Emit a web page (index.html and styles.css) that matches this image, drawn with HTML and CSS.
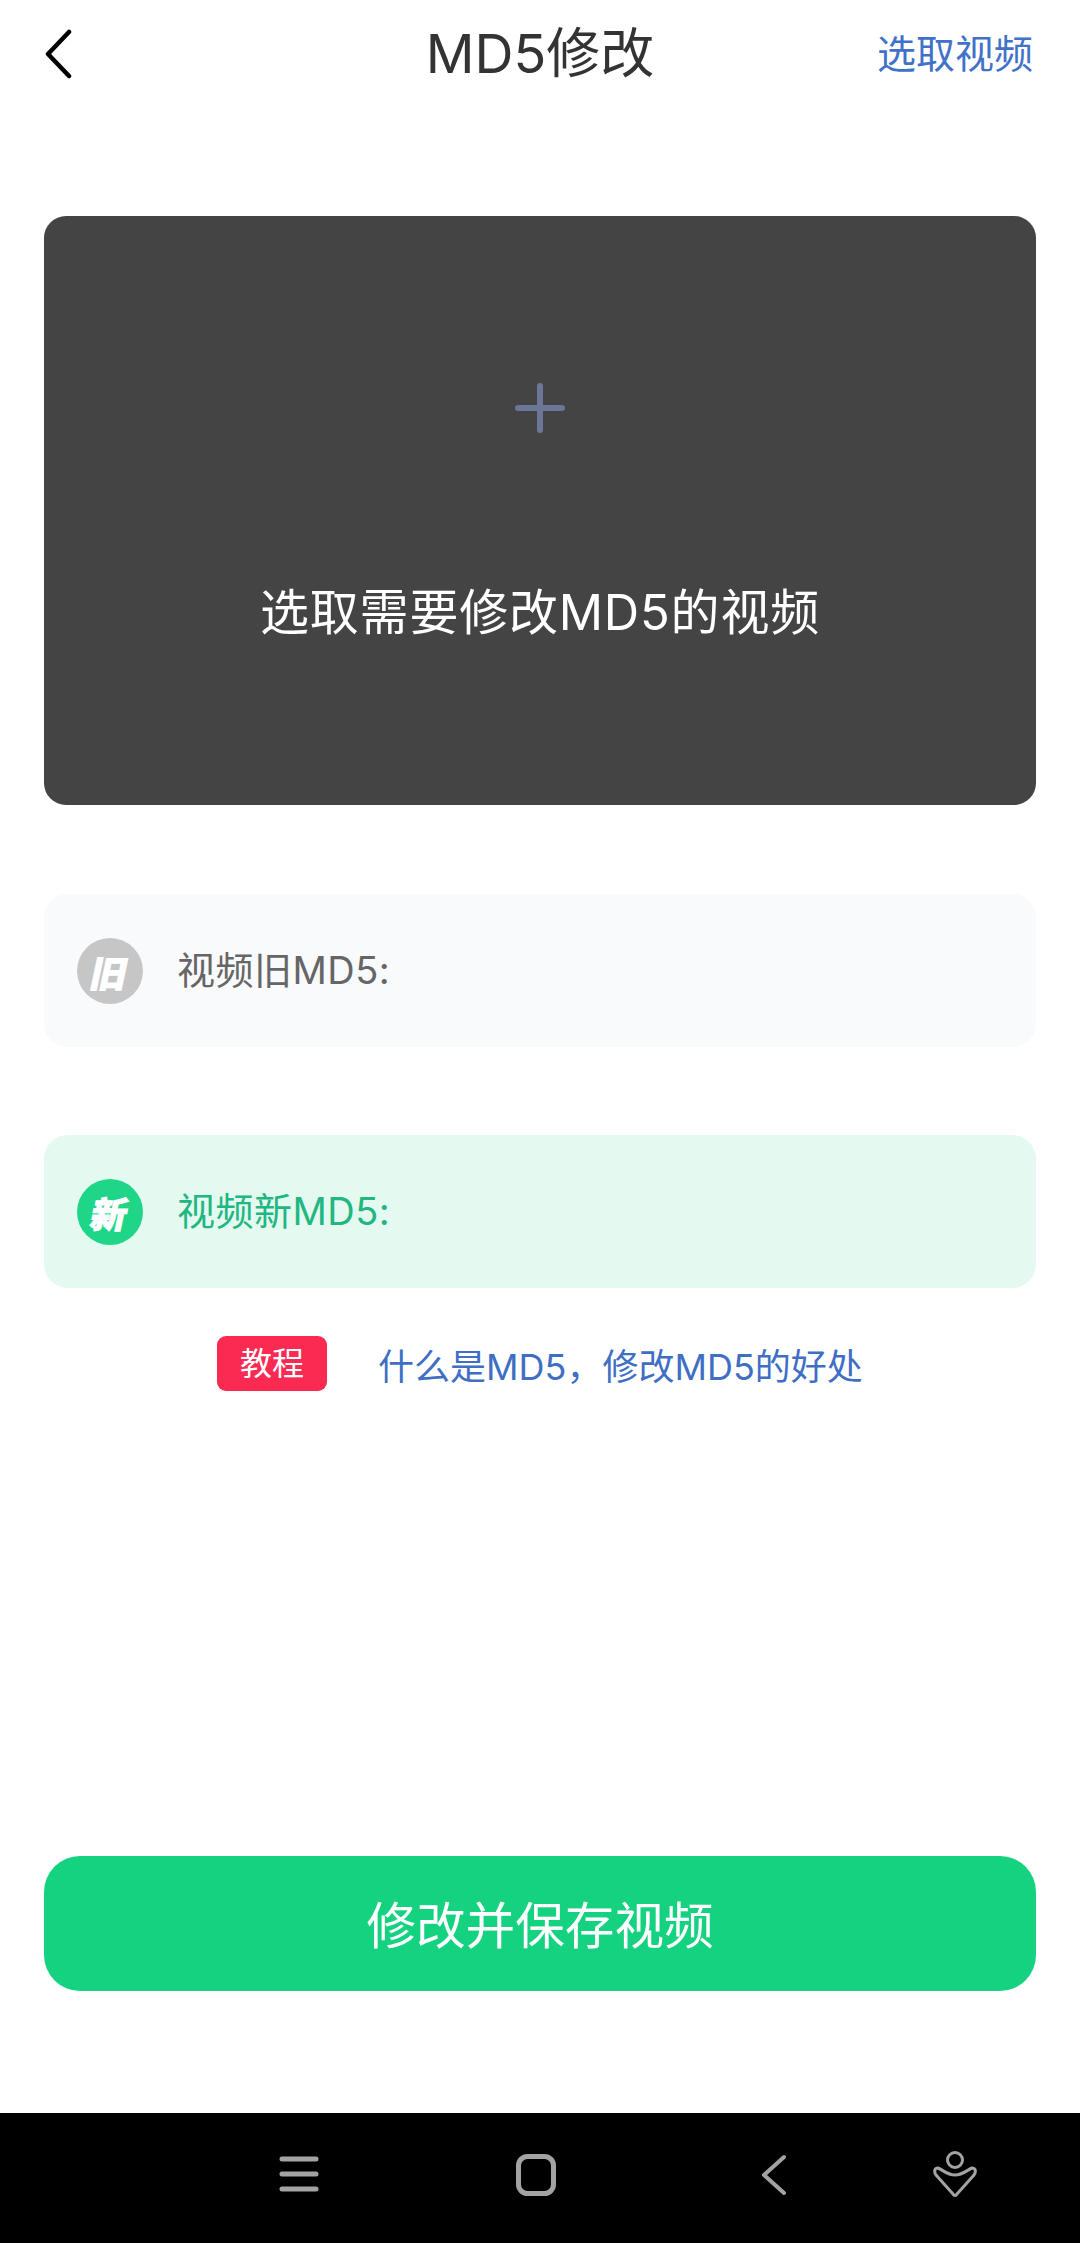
FILE: index.html
```html
<!DOCTYPE html>
<html lang="zh-CN">
<head>
    <meta charset="UTF-8">
    <meta name="viewport" content="width=device-width, initial-scale=1.0">
    <title>MD5修改</title>
    <link rel="stylesheet" href="styles.css">
</head>
<body>

    <div class="screen">
        <header class="top-bar">
            <svg class="back-icon" width="28" height="50" viewBox="0 0 28 50">
                <path d="M25 3 L4 25 L25 47" fill="none" stroke="#000" stroke-width="4.5" stroke-linecap="round" stroke-linejoin="round"></path>
            </svg>
            <h1 class="page-title">MD5修改</h1>
            <a class="pick-link">选取视频</a>
        </header>

        <main class="content">
            <section class="pick-card">
                <svg class="plus-icon" width="50" height="50" viewBox="0 0 50 50">
                    <path d="M25 3 V47 M3 25 H47" fill="none" stroke="#6b7699" stroke-width="6" stroke-linecap="round"></path>
                </svg>
                <p class="pick-text">选取需要修改MD5的视频</p>
            </section>

            <div class="md5-row md5-old">
                <span class="md5-badge"><i>旧</i></span>
                <span class="md5-label">视频旧MD5:</span>
            </div>

            <div class="md5-row md5-new">
                <span class="md5-badge"><i>新</i></span>
                <span class="md5-label">视频新MD5:</span>
            </div>

            <div class="tutorial">
                <span class="tutorial-tag">教程</span>
                <a class="tutorial-link">什么是MD5，修改MD5的好处</a>
            </div>

            <button class="save-btn">修改并保存视频</button>
        </main>

        <nav class="nav-bar">
            <svg class="nav-menu" width="40" height="36" viewBox="0 0 40 36">
                <path d="M3 3 H37 M3 18 H37 M3 33 H37" fill="none" stroke="#a3a3a3" stroke-width="5" stroke-linecap="round"></path>
            </svg>
            <svg class="nav-home" width="40" height="42" viewBox="0 0 40 42">
                <rect x="2.5" y="2.5" width="35" height="37" rx="9" fill="none" stroke="#a3a3a3" stroke-width="5"></rect>
            </svg>
            <svg class="nav-back" width="26" height="42" viewBox="0 0 26 42">
                <path d="M23 3 L3 21 L23 39" fill="none" stroke="#a3a3a3" stroke-width="4" stroke-linecap="round" stroke-linejoin="round"></path>
            </svg>
            <svg class="nav-person" width="44" height="46" viewBox="0 0 44 46">
                <ellipse cx="22" cy="9" rx="7.5" ry="7.5" fill="none" stroke="#a3a3a3" stroke-width="3"></ellipse>
                <path d="M5 17 C10 19 14 24 22 24 C30 24 34 19 39 17 C43 17 43 21 41 24 L24 43 C23 45 21 45 20 43 L3 24 C1 21 1 17 5 17 Z" fill="none" stroke="#a3a3a3" stroke-width="3" stroke-linejoin="round"></path>
            </svg>
        </nav>
    </div>

</body>
</html>
```

FILE: styles.css
```css
* {
    margin: 0;
    padding: 0;
    box-sizing: border-box;
}

body {
    font-family: "Inter", "Noto Sans CJK SC", sans-serif;
    background-color: #ffffff;
    overflow: hidden;
}

.screen {
    display: flex;
    flex-direction: column;
    width: 1080px;
    height: 2243px;
}

.top-bar {
    position: relative;
    display: flex;
    justify-content: space-between;
    align-items: center;
    height: 108px;
    padding: 0 47px 0 44px;
}

.page-title {
    position: absolute;
    left: 0;
    right: 0;
    text-align: center;
    font-size: 54px;
    font-weight: 400;
    line-height: 104px;
    color: #333333;
}

.pick-link {
    font-size: 39px;
    line-height: 106px;
    color: #3f72c8;
}

.content {
    display: flex;
    flex: 1;
    flex-direction: column;
    padding: 108px 44px 0;
}

.pick-card {
    display: flex;
    flex-direction: column;
    align-items: center;
    height: 589px;
    padding-top: 167px;
    background-color: #444444;
    border-radius: 22px;
}

.pick-text {
    margin-top: 148px;
    font-size: 49px;
    letter-spacing: 0.8px;
    line-height: 64px;
    color: #ffffff;
}

.md5-row {
    display: flex;
    align-items: center;
    gap: 34px;
    height: 153px;
    padding-left: 33px;
    border-radius: 24px;
}

.md5-old {
    margin-top: 89px;
    background-color: #f9fafc;
    color: #666666;
}

.md5-new {
    margin-top: 88px;
    background-color: #e4f9f0;
    color: #22b680;
}

.md5-badge {
    display: flex;
    justify-content: center;
    align-items: center;
    width: 66px;
    height: 66px;
    border-radius: 50%;
    color: #ffffff;
    font-size: 36px;
    font-weight: 900;
}

.md5-badge i {
    display: block;
    font-style: normal;
    transform: skewX(-12deg);
    -webkit-text-stroke: 1px #ffffff;
}

.md5-old .md5-badge {
    background-color: #c6c6c6;
}

.md5-new .md5-badge {
    background-color: #1fd688;
}

.md5-label {
    font-size: 38px;
    letter-spacing: 0.5px;
    line-height: 50px;
    padding-bottom: 2px;
}

.tutorial {
    display: flex;
    align-items: center;
    margin-top: 48px;
    padding-left: 173px;
}

.tutorial-tag {
    width: 110px;
    height: 55px;
    line-height: 55px;
    text-align: center;
    background-color: #fa2a52;
    border-radius: 9px;
    color: #ffffff;
    font-size: 32px;
}

.tutorial-link {
    margin-left: 51px;
    font-size: 36px;
    color: #3f6fc4;
}

.save-btn {
    width: 992px;
    height: 135px;
    margin-top: 465px;
    padding-bottom: 4px;
    border: none;
    border-radius: 36px;
    background-color: #14d27f;
    color: #ffffff;
    font-family: inherit;
    font-size: 49.6px;
}

.nav-bar {
    position: relative;
    height: 130px;
    background-color: #000000;
}

.nav-bar svg {
    position: absolute;
}

.nav-menu {
    left: 279px;
    top: 43px;
}

.nav-home {
    left: 516px;
    top: 41px;
}

.nav-back {
    left: 761px;
    top: 41px;
}

.nav-person {
    left: 933px;
    top: 38px;
}
```
